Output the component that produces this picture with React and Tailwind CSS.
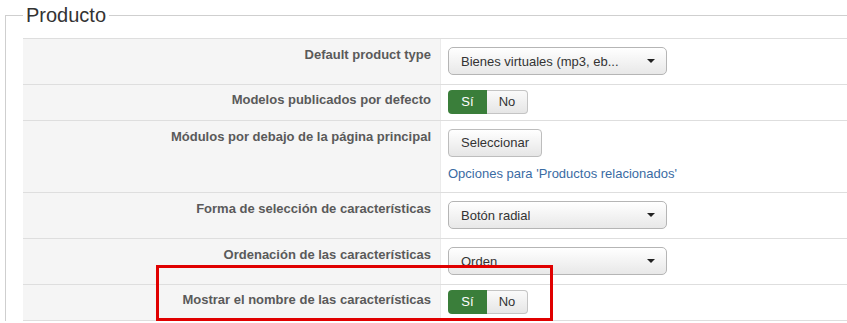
function Caret() {
  return (
    <svg width="8" height="4" viewBox="0 0 8 4" className="shrink-0">
      <polygon points="0,0 8,0 4,4" fill="#222" />
    </svg>
  )
}

function Select({ value }) {
  return (
    <div className="flex h-[28px] w-[219px] items-center justify-between rounded-[5px] border border-[#b5b5b5] bg-gradient-to-b from-white to-[#e8e8e8] pl-[12px] pr-[11px] text-[13px] leading-[18px] text-[#333]">
      <span className="truncate pt-[2px]">{value}</span>
      <Caret />
    </div>
  )
}

function Toggle() {
  return (
    <div className="flex h-[24px] text-[13px] leading-[18px]">
      <div className="flex w-[39px] items-center justify-center rounded-l-[4px] bg-[#3a7e3a] text-white">Sí</div>
      <div className="flex w-[41px] items-center justify-center rounded-r-[4px] border border-l-0 border-[#c4c4c4] bg-gradient-to-b from-[#fafafa] to-[#e6e6e6] text-[#333]">
        No
      </div>
    </div>
  )
}

function Row({ label, labelPad, valuePad, children }) {
  return (
    <div className="flex border-t border-[#dedede]">
      <div className={`w-[417px] shrink-0 bg-[#f5f5f5] pr-[9px] text-right text-[13px] font-bold leading-[18px] text-[#5a5a5a] ${labelPad}`}>
        {label}
      </div>
      <div className={`flex-1 border-l border-[#ebebeb] pl-[7px] ${valuePad}`}>{children}</div>
    </div>
  )
}

export default function App() {
  return (
    <div className="relative h-[323px] overflow-hidden bg-white font-['Liberation_Sans',Arial,sans-serif]">
      <fieldset className="ml-[5px] mt-[5px] border-l border-t border-[#cfcfcf] pl-[17px] pt-[13px]">
        <legend className="px-[3px] text-[20px] leading-[20px] text-[#333]">Producto</legend>
        <div className="border-b border-[#dedede]">
          <Row label="Default product type" labelPad="pt-[7px] pb-[9px]" valuePad="pt-[8px] pb-[9px]">
            <Select value="Bienes virtuales (mp3, eb..." />
          </Row>
          <Row label="Modelos publicados por defecto" labelPad="pt-[6px]" valuePad="pt-[5px] pb-[6px]">
            <Toggle />
          </Row>
          <Row label="Módulos por debajo de la página principal" labelPad="pt-[7px]" valuePad="pt-[8px] pb-[9px]">
            <div className="flex h-[28px] w-[94px] items-center justify-center rounded-[4px] border border-[#bdbdbd] bg-gradient-to-b from-white to-[#e6e6e6] text-[13px] text-[#333]">
              Seleccionar
            </div>
            <div className="mt-[8px] text-[13px] leading-[18px] text-[#3a6ba3]">Opciones para 'Productos relacionados'</div>
          </Row>
          <Row label="Forma de selección de características" labelPad="pt-[7px]" valuePad="pt-[8px] pb-[9px]">
            <Select value="Botón radial" />
          </Row>
          <Row label="Ordenación de las características" labelPad="pt-[7px]" valuePad="pt-[8px] pb-[9px]">
            <Select value="Orden" />
          </Row>
          <Row label="Mostrar el nombre de las características" labelPad="pt-[6px]" valuePad="pt-[5px] pb-[6px]">
            <Toggle />
          </Row>
        </div>
      </fieldset>
      <div className="absolute left-[156px] top-[265px] h-[56px] w-[397px] border-[3px] border-[#e00000]" />
    </div>
  )
}
